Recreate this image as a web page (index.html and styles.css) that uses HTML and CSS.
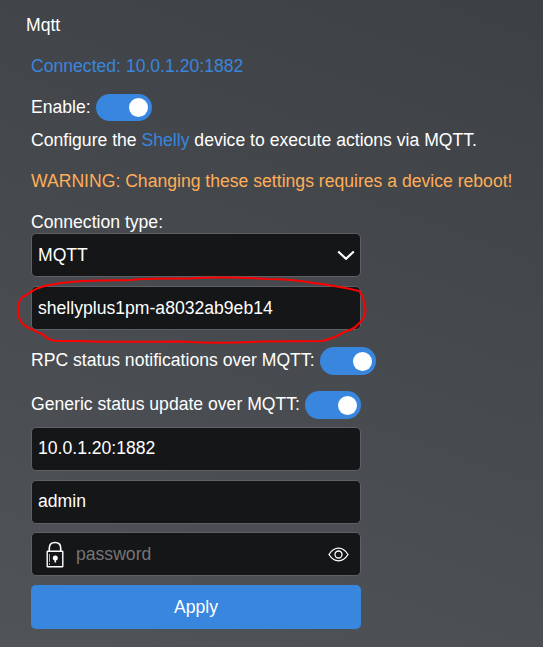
FILE: index.html
```html
<!DOCTYPE html>
<html lang="en">
<head>
    <meta charset="UTF-8">
    <meta name="viewport" content="width=device-width, initial-scale=1.0">
    <title>Mqtt</title>
    <link rel="stylesheet" href="styles.css">
</head>
<body>
    <div class="box">
        <div class="title">Mqtt</div>
        <div class="content">
            <p class="status">Connected: 10.0.1.20:1882</p>
            <div class="row enable">
                <span>Enable:</span>
                <span class="switch"></span>
            </div>
            <p class="desc">Configure the <span class="link">Shelly</span> device to execute actions via MQTT.</p>
            <p class="warning">WARNING: Changing these settings requires a device reboot!</p>
            <p class="label">Connection type:</p>
            <div class="field select">
                <span>MQTT</span>
                <svg class="arrow" width="18" height="11" viewBox="0 0 18 11">
                    <path d="M1.2 1.5 L9 8.8 L16.8 1.5" fill="none" stroke="#fff" stroke-width="2.2"/>
                </svg>
            </div>
            <div class="field marked">
                <span>shellyplus1pm-a8032ab9eb14</span>
                <svg class="mark" width="352" height="72" viewBox="0 0 352 72">
                    <path d="M18 15 C27 10 42 8 60 6.500 C80 5 100 5.500 115 5 C130 3 150 3.500 175 3.500 C190 2 225 2 250 4 C270 4 282 5 297 8 C306 9 308 9 318 11 L332 13.500 L343.500 16 C344.500 19 347 20 347.500 25 C347.500 29 350 31 349.500 36 C348.500 42 347.500 44 343.500 48 C341 51 339 53 335 54.500 C331 56 329 56 325 59 C317 63 313 65 306 66 L245 66.500 C220 68 190 68 165 66.500 C130 67 90 67 56 66 C45 66 37 67 33 64 C28 62 28 58 22 57.500 C18 54 12 54 8 50 C2 45 2 39 2 33 C2 28 3 26 6 22 L10 20.500 C14 16 16 17 18 15 Z"/>
                </svg>
            </div>
            <div class="row rpc">
                <span>RPC status notifications over MQTT:</span>
                <span class="switch"></span>
            </div>
            <div class="row generic">
                <span>Generic status update over MQTT:</span>
                <span class="switch"></span>
            </div>
            <div class="field">10.0.1.20:1882</div>
            <div class="field user">admin</div>
            <div class="field password">
                <svg class="lock" width="18" height="27" viewBox="0 0 18 27">
                    <path d="M3.300 10 V7 C3.300 3.500 5.500 1.500 9 1.500 C12.500 1.500 14.700 3.500 14.700 7 V10" fill="none" stroke="#fff" stroke-width="1.600"/>
                    <rect x="1.200" y="10.200" width="15.600" height="15.600" rx="0.500" fill="none" stroke="#fff" stroke-width="1.400"/>
                    <path d="M3.500 13 V24" stroke="#aaa" stroke-width="1" stroke-dasharray="8 1"/>
                    <circle cx="9.300" cy="17" r="2.500" fill="#fff"/>
                    <path d="M8.500 17 H10.100 V21.500 H8.500 Z" fill="#fff"/>
                </svg>
                <span>password</span>
                <svg class="eye" width="21" height="15" viewBox="0 0 21 15">
                    <path d="M1 7.500 C3.500 3.500 6.500 1.200 10.500 1.200 C14.500 1.200 17.500 3.500 20 7.500 C17.500 11.500 14.500 13.800 10.500 13.800 C6.500 13.800 3.500 11.500 1 7.500 Z" fill="none" stroke="#fff" stroke-width="1.300"/>
                    <circle cx="10.500" cy="7.500" r="3.500" fill="none" stroke="#fff" stroke-width="1.300"/>
                </svg>
            </div>
            <div class="btn">Apply</div>
        </div>
    </div>
</body>
</html>
```
FILE: styles.css
```css
*{
    margin: 0;
    padding: 0;
    box-sizing: border-box;
}
body{
    height: 647px;
    overflow: hidden;
    background: linear-gradient(200deg, #3d4044 0%, #505458 100%);
    color: #fff;
    font: 17.6px/20px "Liberation Sans", Arial, sans-serif;
}
.box{
    padding-top: 15px;
}
.title{
    padding-left: 26px;
}
.content{
    width: 330px;
    margin: 21px 0 0 31px;
}
.content p{
    white-space: nowrap;
}
.status, .link{
    color: #3986de;
}
.row{
    display: flex;
    align-items: center;
    gap: 5px;
    height: 28px;
    white-space: nowrap;
}
.row span:first-child{
    padding-bottom: 2px;
}
.enable{
    height: 27px;
    margin-top: 18px;
}
.switch{
    flex: none;
    width: 56px;
    height: 28px;
    padding: 4.5px 4px;
    border-radius: 14px;
    background-color: #3986de;
}
.enable .switch{
    height: 27px;
    padding-top: 4px;
}
.switch::after{
    content: "";
    display: block;
    width: 19px;
    height: 19px;
    margin-left: auto;
    border-radius: 50%;
    background-color: #fff;
}
.desc{
    margin-top: 9px;
}
.warning{
    margin-top: 21px;
    color: #ffae57;
}
.label{
    margin-top: 21px;
}
.field{
    display: flex;
    align-items: center;
    height: 44px;
    margin-bottom: 9px;
    padding: 0 6px 2px;
    border: 1px solid #5d6064;
    border-radius: 5px;
    background-color: #151618;
}
.select{
    justify-content: space-between;
    margin-top: 1px;
    padding: 0 5px 0 6px;
}
.marked{
    position: relative;
    padding-bottom: 0;
}
.mark{
    position: absolute;
    left: -16px;
    top: -12px;
    fill: none;
    stroke: #f00;
    stroke-width: 2;
}
.rpc{
    margin-top: 17px;
}
.generic{
    margin: 16px 0 8px;
}
.user{
    margin-bottom: 8px;
}
.password{
    padding: 0 11px 0 14px;
    color: #757575;
}
.lock{
    margin-right: 12px;
}
.eye{
    margin-left: auto;
}
.btn{
    height: 44px;
    border-radius: 5px;
    background-color: #3986de;
    line-height: 44px;
    text-align: center;
}
```
